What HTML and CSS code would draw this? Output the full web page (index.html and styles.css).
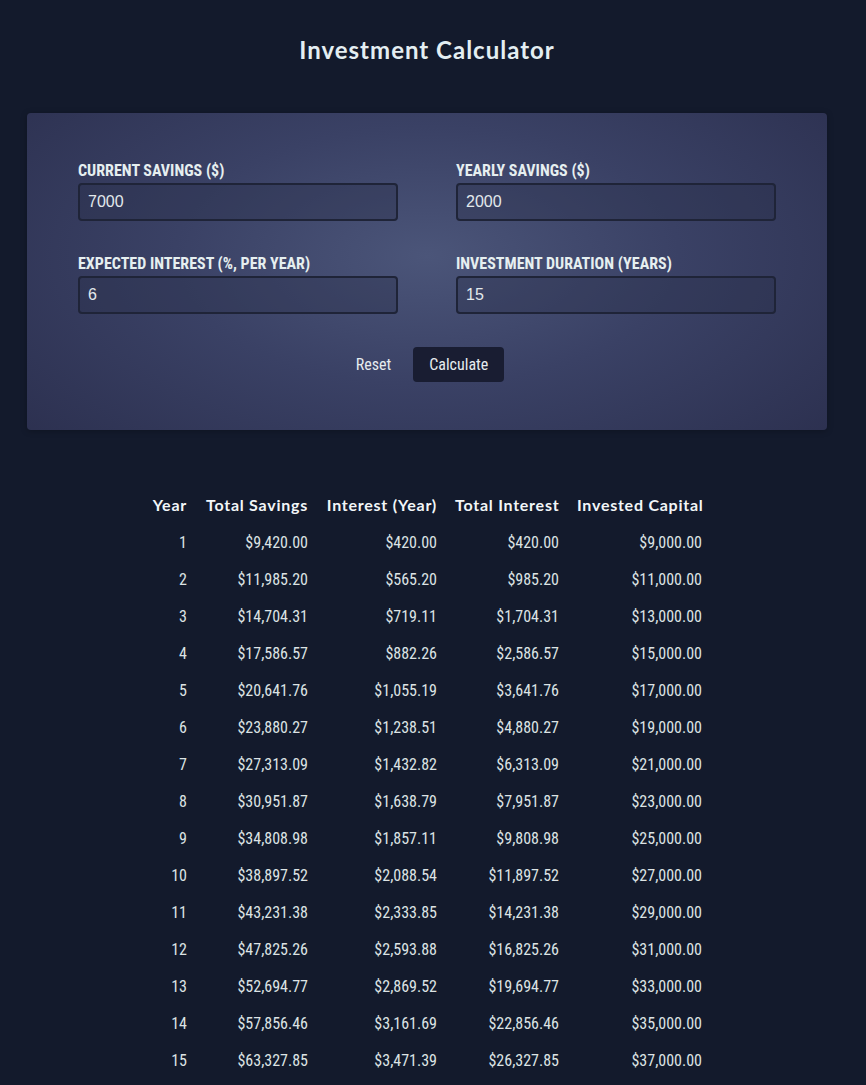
FILE: index.html
```html
<!DOCTYPE html>
<html lang="en">
<head>
<meta charset="utf-8">
<title>Investment Calculator</title>
<link rel="stylesheet" href="styles.css">
</head>
<body>
<header class="header">
  <h1>Investment Calculator</h1>
</header>
<form class="form">
  <div class="input-grid">
    <p class="field">
      <label for="current-savings">Current Savings ($)</label>
      <input type="number" id="current-savings" value="7000">
    </p>
    <p class="field">
      <label for="yearly-contribution">Yearly Savings ($)</label>
      <input type="number" id="yearly-contribution" value="2000">
    </p>
    <p class="field">
      <label for="expected-return">Expected Interest (%, per year)</label>
      <input type="number" id="expected-return" value="6">
    </p>
    <p class="field">
      <label for="duration">Investment Duration (years)</label>
      <input type="number" id="duration" value="15">
    </p>
  </div>
  <p class="actions">
    <button type="reset" class="button-alt">Reset</button>
    <button type="button" class="button">Calculate</button>
  </p>
</form>
<table class="result">
  <colgroup>
    <col class="c1"><col class="c2"><col class="c3"><col class="c4"><col class="c5">
  </colgroup>
  <thead>
    <tr>
      <th>Year</th>
      <th>Total Savings</th>
      <th>Interest (Year)</th>
      <th>Total Interest</th>
      <th>Invested Capital</th>
    </tr>
  </thead>
  <tbody>
    <tr><td>1</td><td>$9,420.00</td><td>$420.00</td><td>$420.00</td><td>$9,000.00</td></tr>
    <tr><td>2</td><td>$11,985.20</td><td>$565.20</td><td>$985.20</td><td>$11,000.00</td></tr>
    <tr><td>3</td><td>$14,704.31</td><td>$719.11</td><td>$1,704.31</td><td>$13,000.00</td></tr>
    <tr><td>4</td><td>$17,586.57</td><td>$882.26</td><td>$2,586.57</td><td>$15,000.00</td></tr>
    <tr><td>5</td><td>$20,641.76</td><td>$1,055.19</td><td>$3,641.76</td><td>$17,000.00</td></tr>
    <tr><td>6</td><td>$23,880.27</td><td>$1,238.51</td><td>$4,880.27</td><td>$19,000.00</td></tr>
    <tr><td>7</td><td>$27,313.09</td><td>$1,432.82</td><td>$6,313.09</td><td>$21,000.00</td></tr>
    <tr><td>8</td><td>$30,951.87</td><td>$1,638.79</td><td>$7,951.87</td><td>$23,000.00</td></tr>
    <tr><td>9</td><td>$34,808.98</td><td>$1,857.11</td><td>$9,808.98</td><td>$25,000.00</td></tr>
    <tr><td>10</td><td>$38,897.52</td><td>$2,088.54</td><td>$11,897.52</td><td>$27,000.00</td></tr>
    <tr><td>11</td><td>$43,231.38</td><td>$2,333.85</td><td>$14,231.38</td><td>$29,000.00</td></tr>
    <tr><td>12</td><td>$47,825.26</td><td>$2,593.88</td><td>$16,825.26</td><td>$31,000.00</td></tr>
    <tr><td>13</td><td>$52,694.77</td><td>$2,869.52</td><td>$19,694.77</td><td>$33,000.00</td></tr>
    <tr><td>14</td><td>$57,856.46</td><td>$3,161.69</td><td>$22,856.46</td><td>$35,000.00</td></tr>
    <tr><td>15</td><td>$63,327.85</td><td>$3,471.39</td><td>$26,327.85</td><td>$37,000.00</td></tr>
  </tbody>
</table>
</body>
</html>
```

FILE: styles.css
```css
* {
  box-sizing: border-box;
}

html {
  font-family: "Roboto Condensed", "Liberation Sans Narrow", "Roboto", sans-serif;
}

body {
  margin: 0;
  padding: 0 12px 0 0;
  background: #131a2c;
  color: #e1e7ea;
  min-height: 1085px;
}

.header {
  text-align: center;
  padding-top: 34px;
  height: 113px;
}

.header h1 {
  margin: 0;
  font-family: "Lato", "Noto Sans", sans-serif;
  font-size: 24px;
  font-weight: 700;
  line-height: 32px;
  color: #e4eef2;
  letter-spacing: 1px;
}

.form {
  width: 800px;
  margin: 0 auto;
  padding: 48px 51px 48px;
  height: 317px;
  border-radius: 4px;
  background: radial-gradient(ellipse 70% 90% at 50% 45%, #4b5579 0%, #3a4165 45%, #2b2f4e 100%);
  box-shadow: 0 1px 6px rgba(0, 0, 0, 0.25);
}

.input-grid {
  display: grid;
  grid-template-columns: 320px 320px;
  column-gap: 58px;
  row-gap: 33px;
}

.field {
  margin: 0;
  display: flex;
  flex-direction: column;
}

.field label {
  display: block;
  font-size: 16px;
  font-weight: 700;
  text-transform: uppercase;
  line-height: 19px;
  margin-bottom: 3px;
  color: #e6eff0;
}

.field input {
  width: 320px;
  height: 38px;
  padding: 4px 8px;
  font-family: "Liberation Sans", Arial, sans-serif;
  font-size: 16px;
  color: #e3e9ec;
  background: rgba(40, 45, 72, 0.35);
  border: 2px solid #1f2438;
  border-radius: 4px;
  -moz-appearance: textfield;
  appearance: textfield;
}

.field input::-webkit-outer-spin-button,
.field input::-webkit-inner-spin-button {
  -webkit-appearance: none;
  margin: 0;
}

.actions {
  margin: 33px 0 0;
  display: flex;
  justify-content: center;
  gap: 7px;
  padding-right: 9px;
}

.button,
.button-alt {
  font-family: inherit;
  font-size: 16px;
  line-height: 19px;
  cursor: pointer;
  border-radius: 4px;
  height: 35px;
}

.button {
  padding: 8px 16px;
  border: none;
  background: #191d32;
  color: #e6ecef;
}

.button-alt {
  padding: 8px 15px;
  border: none;
  background: transparent;
  color: #e6ecef;
}

.result {
  margin: 55px auto 0;
  width: 570px;
  table-layout: fixed;
  border-spacing: 2px;
  font-size: 16px;
  text-align: right;
}

.result th {
  font-family: "Lato", "Noto Sans", sans-serif;
  font-weight: 700;
  color: #f2f6f8;
  padding: 8px 8px 9px;
  line-height: 19px;
  white-space: nowrap;
  letter-spacing: 0.75px;
}

.result td {
  padding: 8px;
  line-height: 19px;
  color: #dde3e4;
}

.c1 { width: 51px; }
.c2 { width: 119px; }
.c3 { width: 127px; }
.c4 { width: 120px; }
.c5 { width: 141px; }
```
